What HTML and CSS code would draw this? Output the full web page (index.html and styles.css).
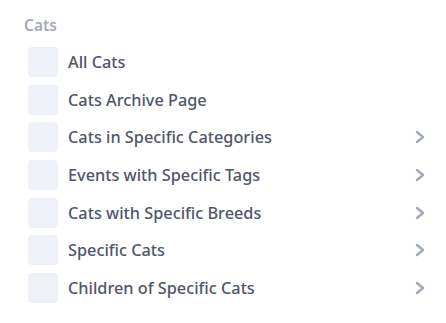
FILE: index.html
```html
<!DOCTYPE html>
<html>
<head>
<meta charset="utf-8">
<link rel="stylesheet" href="styles.css">
</head>
<body>
<div class="panel">
  <div class="heading">Cats</div>
  <ul class="list">
    <li class="row"><span class="box"></span><span class="label">All Cats</span></li>
    <li class="row"><span class="box"></span><span class="label">Cats Archive Page</span></li>
    <li class="row"><span class="box"></span><span class="label">Cats in Specific Categories</span><svg class="chev" viewBox="0 0 12 14"><path d="M3 2 L9 7 L3 12"/></svg></li>
    <li class="row"><span class="box"></span><span class="label">Events with Specific Tags</span><svg class="chev" viewBox="0 0 12 14"><path d="M3 2 L9 7 L3 12"/></svg></li>
    <li class="row"><span class="box"></span><span class="label">Cats with Specific Breeds</span><svg class="chev" viewBox="0 0 12 14"><path d="M3 2 L9 7 L3 12"/></svg></li>
    <li class="row"><span class="box"></span><span class="label">Specific Cats</span><svg class="chev" viewBox="0 0 12 14"><path d="M3 2 L9 7 L3 12"/></svg></li>
    <li class="row"><span class="box"></span><span class="label">Children of Specific Cats</span><svg class="chev" viewBox="0 0 12 14"><path d="M3 2 L9 7 L3 12"/></svg></li>
  </ul>
</div>
</body>
</html>
```
FILE: styles.css
```css
html, body { margin: 0; padding: 0; background: #fff; }
body { font-family: "Noto Sans", "Open Sans", sans-serif; }
.panel { padding: 15px 20px 0 24px; }
.heading { font-size: 15.5px; font-weight: 600; color: #a4aab7; line-height: 20px; height: 20px; }
.list { list-style: none; margin: 12px 0 0 4px; padding: 0; display: flex; flex-direction: column; gap: 7.67px; }
.row { display: flex; align-items: center; height: 30px; }
.box { width: 30px; height: 30px; border-radius: 4px; background: #eef1f8; flex: none; }
.label { margin-left: 10px; font-size: 16.3px; font-weight: 500; color: #50566a; flex: 1; }
.chev { width: 12px; height: 14px; fill: none; stroke: #a2aab9; stroke-width: 2.4; stroke-linecap: round; stroke-linejoin: round; margin-right: 0; }
```
